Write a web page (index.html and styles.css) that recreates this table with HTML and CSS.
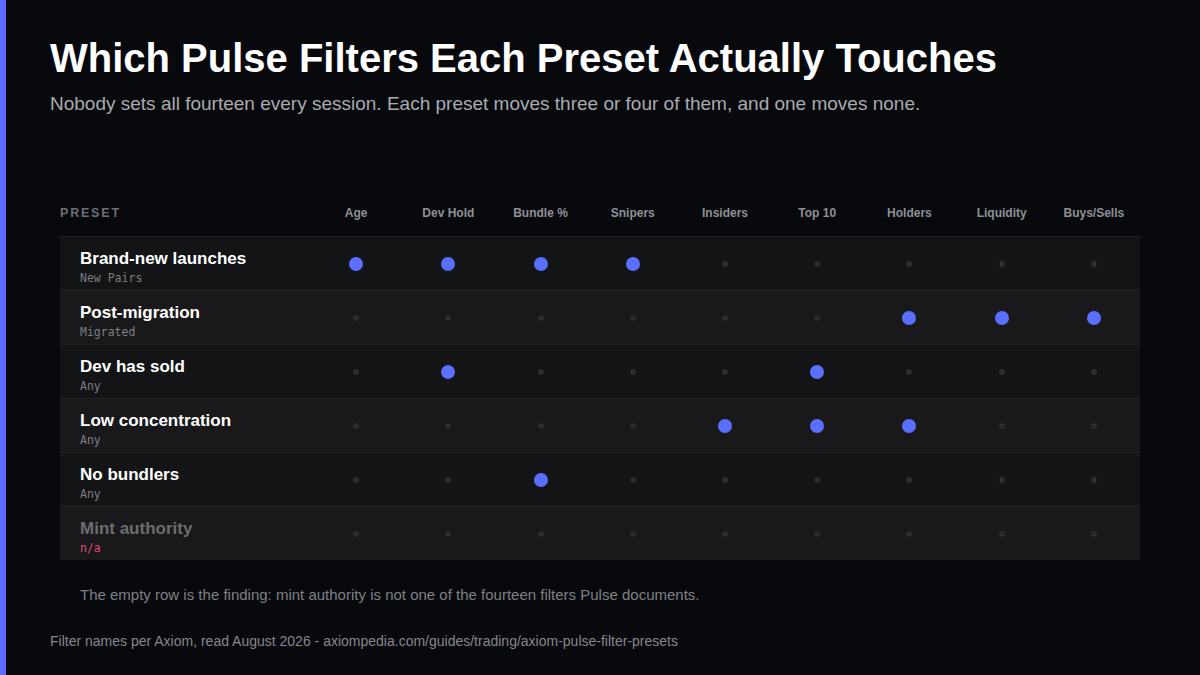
FILE: index.html
```html
<!DOCTYPE html>
<html>
<head>
<meta charset="utf-8">
<link rel="stylesheet" href="styles.css">
</head>
<body>
<div class="page">
  <h1 class="title">Which Pulse Filters Each Preset Actually Touches</h1>
  <p class="subtitle">Nobody sets all fourteen every session. Each preset moves three or four of them, and one moves none.</p>

  <div class="table">
    <div class="head">
      <div class="head-preset">PRESET</div>
      <div class="col">Age</div>
      <div class="col">Dev Hold</div>
      <div class="col">Bundle %</div>
      <div class="col">Snipers</div>
      <div class="col">Insiders</div>
      <div class="col">Top 10</div>
      <div class="col">Holders</div>
      <div class="col">Liquidity</div>
      <div class="col">Buys/Sells</div>
    </div>

    <div class="row dark">
      <div class="preset"><div class="name">Brand-new launches</div><div class="sub">New Pairs</div></div>
      <div class="cell"><span class="on"></span></div>
      <div class="cell"><span class="on"></span></div>
      <div class="cell"><span class="on"></span></div>
      <div class="cell"><span class="on"></span></div>
      <div class="cell"><span class="off"></span></div>
      <div class="cell"><span class="off"></span></div>
      <div class="cell"><span class="off"></span></div>
      <div class="cell"><span class="off"></span></div>
      <div class="cell"><span class="off"></span></div>
    </div>

    <div class="row light">
      <div class="preset"><div class="name">Post-migration</div><div class="sub">Migrated</div></div>
      <div class="cell"><span class="off"></span></div>
      <div class="cell"><span class="off"></span></div>
      <div class="cell"><span class="off"></span></div>
      <div class="cell"><span class="off"></span></div>
      <div class="cell"><span class="off"></span></div>
      <div class="cell"><span class="off"></span></div>
      <div class="cell"><span class="on"></span></div>
      <div class="cell"><span class="on"></span></div>
      <div class="cell"><span class="on"></span></div>
    </div>

    <div class="row dark">
      <div class="preset"><div class="name">Dev has sold</div><div class="sub">Any</div></div>
      <div class="cell"><span class="off"></span></div>
      <div class="cell"><span class="on"></span></div>
      <div class="cell"><span class="off"></span></div>
      <div class="cell"><span class="off"></span></div>
      <div class="cell"><span class="off"></span></div>
      <div class="cell"><span class="on"></span></div>
      <div class="cell"><span class="off"></span></div>
      <div class="cell"><span class="off"></span></div>
      <div class="cell"><span class="off"></span></div>
    </div>

    <div class="row light">
      <div class="preset"><div class="name">Low concentration</div><div class="sub">Any</div></div>
      <div class="cell"><span class="off"></span></div>
      <div class="cell"><span class="off"></span></div>
      <div class="cell"><span class="off"></span></div>
      <div class="cell"><span class="off"></span></div>
      <div class="cell"><span class="on"></span></div>
      <div class="cell"><span class="on"></span></div>
      <div class="cell"><span class="on"></span></div>
      <div class="cell"><span class="off"></span></div>
      <div class="cell"><span class="off"></span></div>
    </div>

    <div class="row dark">
      <div class="preset"><div class="name">No bundlers</div><div class="sub">Any</div></div>
      <div class="cell"><span class="off"></span></div>
      <div class="cell"><span class="off"></span></div>
      <div class="cell"><span class="on"></span></div>
      <div class="cell"><span class="off"></span></div>
      <div class="cell"><span class="off"></span></div>
      <div class="cell"><span class="off"></span></div>
      <div class="cell"><span class="off"></span></div>
      <div class="cell"><span class="off"></span></div>
      <div class="cell"><span class="off"></span></div>
    </div>

    <div class="row light">
      <div class="preset"><div class="name muted">Mint authority</div><div class="sub na">n/a</div></div>
      <div class="cell"><span class="off"></span></div>
      <div class="cell"><span class="off"></span></div>
      <div class="cell"><span class="off"></span></div>
      <div class="cell"><span class="off"></span></div>
      <div class="cell"><span class="off"></span></div>
      <div class="cell"><span class="off"></span></div>
      <div class="cell"><span class="off"></span></div>
      <div class="cell"><span class="off"></span></div>
      <div class="cell"><span class="off"></span></div>
    </div>
  </div>

  <p class="note">The empty row is the finding: mint authority is not one of the fourteen filters Pulse documents.</p>
  <p class="source">Filter names per Axiom, read August 2026 - axiompedia.com/guides/trading/axiom-pulse-filter-presets</p>
</div>
</body>
</html>
```

FILE: styles.css
```css
* { box-sizing: border-box; }
html, body {
  margin: 0;
  padding: 0;
  background: #08090c;
}
body {
  width: 1200px;
  height: 675px;
  overflow: hidden;
  font-family: "Liberation Sans", Arial, sans-serif;
}
.page {
  height: 675px;
  border-left: 6px solid #5b6cff;
  padding: 34px 0 0 44px;
}
.title {
  margin: 0;
  font-size: 40px;
  line-height: 48px;
  font-weight: 700;
  color: #ffffff;
}
.subtitle {
  margin: 10px 0 0;
  font-size: 19px;
  line-height: 24px;
  color: #a9abb0;
}
.table {
  margin: 72px 0 0 10px;
  width: 1080px;
}
.head, .row {
  display: grid;
  grid-template-columns: 250px repeat(9, 1fr);
  align-items: center;
}
.head {
  height: 48px;
  padding-top: 1px;
}
.head-preset {
  font-size: 12.5px;
  font-weight: 700;
  letter-spacing: 1.8px;
  color: #6c6f77;
}
.col {
  text-align: center;
  font-size: 12px;
  font-weight: 700;
  color: #8e9096;
}
.row {
  height: 54px;
  border-top: 1px solid #202124;
}
.row:first-of-type { border-top: none; }
.dark { background: #131416; }
.light { background: #19191b; }
.preset {
  padding: 8px 0 0 20px;
}
.name {
  font-size: 17px;
  line-height: 20px;
  font-weight: 700;
  color: #ffffff;
}
.name.muted { color: #6b6c70; }
.sub {
  font-family: "DejaVu Sans Mono", "Liberation Mono", monospace;
  font-size: 11.5px;
  line-height: 16px;
  color: #7c7e83;
  margin-top: 1px;
}
.sub.na { color: #e0457d; }
.cell {
  display: flex;
  justify-content: center;
  align-items: center;
}
.on {
  width: 14px;
  height: 14px;
  border-radius: 50%;
  background: #5a6eff;
}
.off {
  width: 6px;
  height: 6px;
  border-radius: 50%;
  background: #2c2d31;
}
.note {
  margin: 26px 0 0 30px;
  font-size: 15px;
  line-height: 18px;
  color: #7f8085;
}
.source {
  margin: 28px 0 0;
  font-size: 14px;
  line-height: 18px;
  color: #86878c;
}
```
